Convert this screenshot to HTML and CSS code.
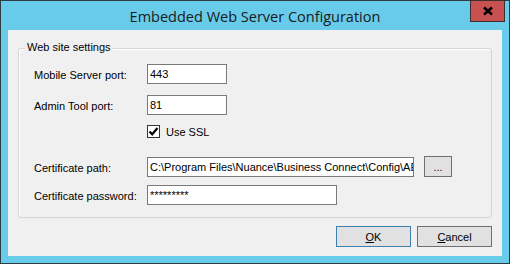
FILE: index.html
```html
<!DOCTYPE html>
<html>
<head>
<meta charset="utf-8">
<link rel="stylesheet" href="styles.css">
</head>
<body>
<div class="window">
  <div class="titlebar">
    <span class="title">Embedded Web Server Configuration</span>
    <div class="close">
      <svg width="12" height="10" viewBox="0 0 12 10"><path d="M2 1.5 L10 8.5 M10 1.5 L2 8.5" stroke="#000" stroke-width="2.6" fill="none"/></svg>
    </div>
  </div>
  <div class="client">
    <div class="group">
      <span class="legend">Web site settings</span>
      <div class="row">
        <label class="lbl">Mobile Server port:</label>
        <input class="field port" type="text" value="443">
      </div>
      <div class="row r2">
        <label class="lbl">Admin Tool port:</label>
        <input class="field port" type="text" value="81">
      </div>
      <div class="row check-row">
        <span class="box">
          <svg width="11" height="11" viewBox="0 0 11 11"><path d="M1.5 5.5 L4.2 8.3 L9.5 2" stroke="#000" stroke-width="2.2" fill="none"/></svg>
        </span>
        <span class="check-text">Use SSL</span>
      </div>
      <div class="row cert-row">
        <label class="lbl">Certificate path:</label>
        <input class="field path" type="text" value="C:\Program Files\Nuance\Business Connect\Config\AEServer.pfx">
        <button class="browse">...</button>
      </div>
      <div class="row pw-row">
        <label class="lbl">Certificate password:</label>
        <input class="field pw" type="text" value="*********">
      </div>
    </div>
    <div class="actions">
      <button class="btn default"><u>O</u>K</button>
      <button class="btn"><u>C</u>ancel</button>
    </div>
  </div>
</div>
</body>
</html>
```

FILE: styles.css
```css
html, body {
  margin: 0;
  padding: 0;
  background: #fff;
}
body {
  font-family: "Liberation Sans", Arial, sans-serif;
  font-size: 11px;
  color: #000;
}
.window {
  position: relative;
  width: 510px;
  height: 264px;
  box-sizing: border-box;
  border: 1px solid #2f3b42;
  background: #67cbe9;
  display: flex;
  flex-direction: column;
}
.titlebar {
  height: 29px;
  display: flex;
  align-items: center;
  justify-content: center;
}
.title {
  font-family: "Open Sans", "Noto Sans", sans-serif;
  font-size: 14.5px;
  color: #1a1a1a;
  margin-top: 1px;
}
.close {
  position: absolute;
  top: -1px;
  right: 4px;
  width: 35px;
  height: 22px;
  box-sizing: border-box;
  border: 1px solid #3a3030;
  background: #c75050;
  display: flex;
  align-items: center;
  justify-content: center;
}
.client {
  flex: 1;
  margin: 0 7px 7px 7px;
  background: #f0f0f0;
  display: flex;
  flex-direction: column;
}
.group {
  position: relative;
  margin: 18px 0 0 10px;
  width: 474px;
  height: 170px;
  box-sizing: border-box;
  border: 1px solid #d5d5d5;
  border-radius: 3px;
  box-shadow: inset 1px 1px 0 #fff;
  padding: 15px 0 0 15px;
}
.legend {
  position: absolute;
  top: -8px;
  left: 6px;
  padding: 0 2px;
  line-height: 13px;
  background: #f0f0f0;
}
.row {
  display: flex;
  align-items: center;
  height: 20px;
}
.lbl {
  width: 113px;
  flex: none;
  padding-top: 1px;
}
.r2 { margin-top: 11px; }
.check-row {
  margin-top: 10px;
  height: 13px;
  padding-left: 113px;
}
.cert-row { margin-top: 19px; }
.pw-row { margin-top: 8px; }
.field {
  box-sizing: border-box;
  height: 20px;
  border: 1px solid #7a7a7a;
  background: #fff;
  padding: 0 0 0 2px;
  margin: 0;
  font-family: "Liberation Sans", Arial, sans-serif;
  font-size: 11px;
  color: #000;
  outline: none;
}
.port { width: 80px; }
.path { width: 267px; }
.pw { width: 190px; }
.box {
  width: 13px;
  height: 13px;
  box-sizing: border-box;
  border: 1px solid #333;
  background: #fff;
  display: flex;
  align-items: center;
  justify-content: center;
}
.check-text {
  margin-left: 6px;
}
.browse {
  margin: -1px 0 0 10px;
  width: 28px;
  height: 21px;
  box-sizing: border-box;
  border: 1px solid #707070;
  background: #e1e1e1;
  font-family: "Liberation Sans", Arial, sans-serif;
  font-size: 11px;
  padding: 0;
  color: #3a0050;
}
.actions {
  display: flex;
  justify-content: flex-end;
  gap: 6px;
  margin-top: 8px;
  padding-right: 10px;
}
.btn {
  width: 75px;
  height: 21px;
  box-sizing: border-box;
  border: 1px solid #707070;
  background: #e1e1e1;
  font-family: "Liberation Sans", Arial, sans-serif;
  font-size: 11px;
  color: #000;
  padding: 0;
}
.btn.default {
  border-color: #3c7fb1;
}
```
